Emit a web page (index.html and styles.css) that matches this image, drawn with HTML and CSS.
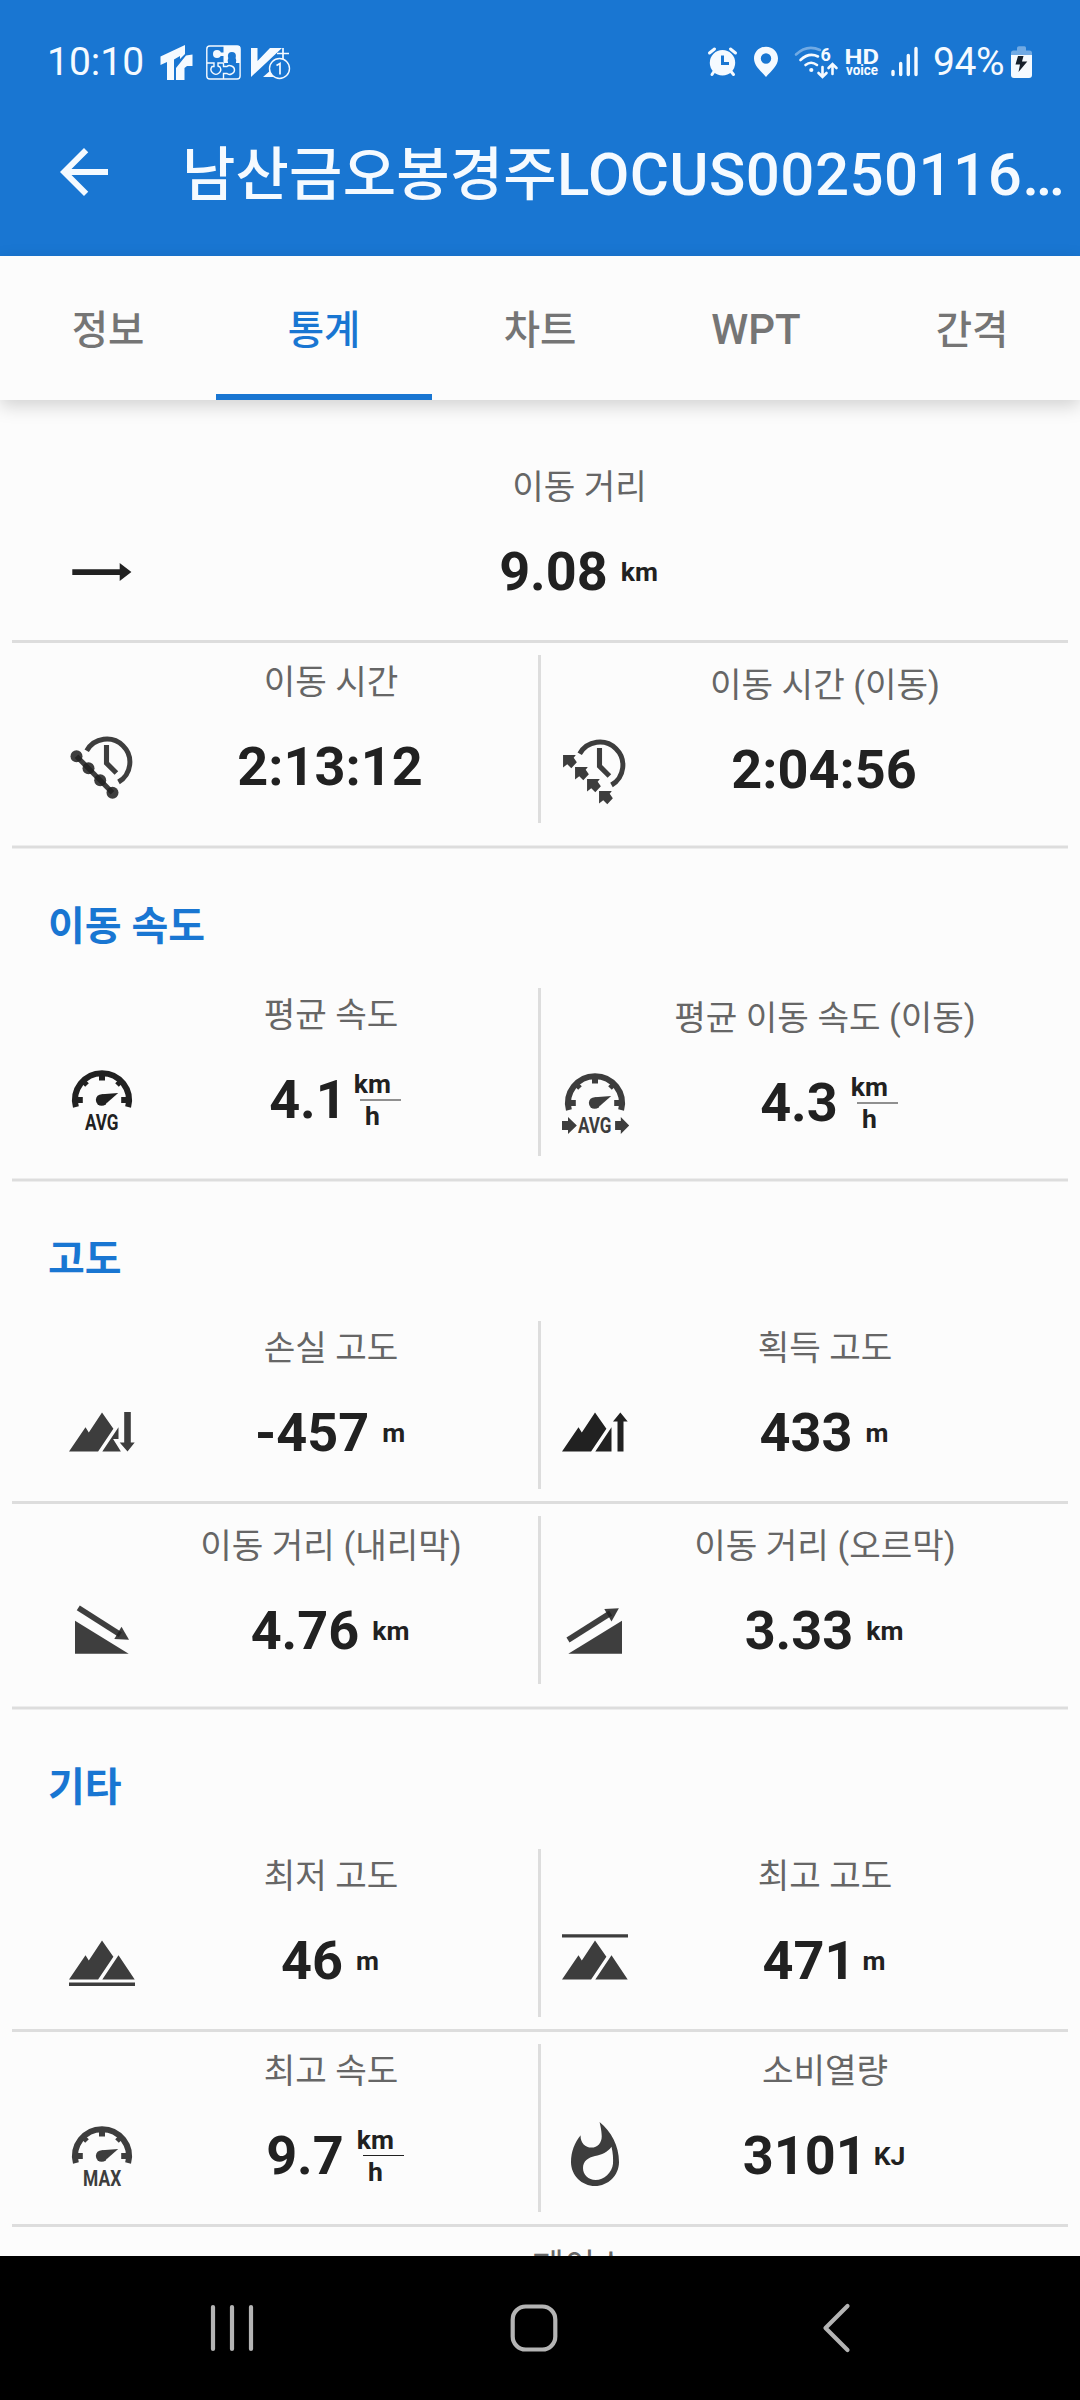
FILE: index.html
```html
<!DOCTYPE html>
<html lang="ko">
<head>
<meta charset="utf-8">
<title>통계</title>
<link rel="stylesheet" href="styles.css">
</head>
<body>
<svg class="defs" aria-hidden="true">
  <defs>
    <g id="gauge">
      <path d="M3.3 14.35A9 9 0 1 1 20.7 14.35" fill="none" stroke="currentColor" stroke-width="2"/>
      <path d="M3 12h2.6M21 12h-2.6M12 3v2.5" fill="none" stroke="currentColor" stroke-width="2"/>
      <path d="M5.9 5.9l1.1 1.1M18.100 5.9l-1.1 1.1" fill="none" stroke="currentColor" stroke-width="1.700"/>
      <path d="M11.900 10.100L17.400 9.700L13.600 13Z"/>
      <circle cx="11.900" cy="12" r="1.950"/>
    </g>
    <g id="clock">
      <path d="M6.900 6.550A7.7 7.7 0 1 1 17.500 17" fill="none" stroke="currentColor" stroke-width="1.650"/>
      <path d="M13.500 4.650V10.700L16.800 14" fill="none" stroke="currentColor" stroke-width="1.700"/>
    </g>
    <path id="peak" d="M1 18.200L6.500 10.100L7.600 11.800L12 5.200L15.800 10.600L10.700 18.200Z"/>
    <path id="hop" d="M1.350 7H5.600L4.900 7.900L5.950 9.400L4.100 11.400L2.750 10.100L1.350 11.200Z"/>
  </defs>
</svg>

<header class="appbar">
  <div class="status">
    <div class="status-side">
      <span class="time">10:10</span>
      <svg class="i-brand" viewBox="160 42 33 40"><path d="M160.500 56.500L185 45V54L180 59V56L174 59.500V80H167V62L160.500 65ZM176 80V68L186 55.500L192.500 54.500V66H187L184.500 68V80Z"/></svg>
      <svg class="i-puzzle" viewBox="205 42 37 40">
        <rect x="206.800" y="46" width="33.300" height="33" rx="3" fill="none" stroke="currentColor" stroke-width="1.400"/>
        <path d="M223.500 46H240V63H235.500C237 61 236.500 57 232 57S227 61 228.500 63H223.500Z"/>
        <circle cx="231.900" cy="56" r="4" class="cut"/><path d="M229 57h6l1 6h-8z" class="cut"/>
        <circle cx="217" cy="54" r="4"/><path d="M218 52.500h6v3.500h-6z"/>
        <path d="M207 63H214V66.500H212A4.800 4.800 0 1 0 220 67L218 66V63H223.500M223.500 63V66.500H227C229 64.500 234.500 66 234.500 70S229 75.500 227 73.500H223.500V79" fill="none" stroke="currentColor" stroke-width="1.400"/>
      </svg>
      <svg class="i-vplus" viewBox="250 42 42 40">
        <path d="M251 48H257.500V61L270 48H282L251 77ZM263 77L271 70L274 77Z"/>
        <path d="M283 48V59M277 53.500H289" stroke="currentColor" stroke-width="1.700"/>
        <circle cx="279.500" cy="68.500" r="10" class="ring"/>
        <path d="M276.500 65.500L280 63.500V74.500" fill="none" stroke="currentColor" stroke-width="1.700"/>
      </svg>
    </div>
    <div class="status-side">
      <svg class="i-alarm" viewBox="708 42 32 40">
        <circle cx="723.500" cy="62.800" r="12.700"/>
        <path d="M710.500 53L715.500 49M736.500 53L731.500 49M715 71.500L713 74.500M732 71.500L734.500 74.500" stroke="currentColor" stroke-width="3" stroke-linecap="round"/>
        <path d="M723.500 55.500V63.500H730" fill="none" class="cutline"/>
      </svg>
      <svg class="i-pin" viewBox="754 42 26 40"><path fill-rule="evenodd" d="M767 46.700C760 46.700 755 52 755 58.500C755 66 762 71 767 77C772 71 779 66 779 58.500C779 52 774 46.700 767 46.700ZM767 53.300A5.200 5.200 0 1 1 767 63.700A5.200 5.200 0 1 1 767 53.300Z"/></svg>
      <svg class="i-wifi" viewBox="794 42 46 40">
        <g fill="none" stroke="currentColor" stroke-linecap="round" stroke-width="2.600">
          <path d="M797 54.500Q808 44 821 50" opacity=".4"/>
          <path d="M801.500 60Q810 52 819 56.500M806.500 65Q812 60.500 818 65"/>
          <path d="M823.500 67V76.500M819.500 73L823.500 77L827.500 73M833.500 74V64.500M829.500 68L833.500 64L837.500 68"/>
        </g>
        <circle cx="812.300" cy="70" r="2.100"/>
        <text x="821.500" y="61" font-size="18" font-weight="700">6</text>
      </svg>
      <svg class="i-hd" viewBox="845 42 36 40">
        <text x="845.500" y="64" font-size="21" font-weight="700" textLength="34.500" lengthAdjust="spacingAndGlyphs">HD</text>
        <text x="847" y="75" font-size="14" font-weight="700" textLength="32" lengthAdjust="spacingAndGlyphs">voice</text>
      </svg>
      <svg class="i-signal" viewBox="891 42 30 40"><path d="M894 71.500V74.500M901.700 63.500V74.500M909.300 55.500V74.500M917 48.500V74.500" stroke="currentColor" stroke-width="3.400" stroke-linecap="round"/></svg>
      <span class="percent">94%</span>
      <svg class="i-battery" viewBox="1011 42 23 40">
        <path d="M1012 56V53Q1012 50.500 1014.500 50.500H1018V48Q1018 46.300 1020 46.300H1025.500Q1027 46.300 1027 48V50.500H1030.500Q1033 50.500 1033 53V56Z" opacity=".4"/>
        <path d="M1012 55H1033V75Q1033 78 1030 78H1015Q1012 78 1012 75Z"/>
        <path d="M1019 56H1024.500L1023 61.500H1028.300L1019.500 72L1021 64.500H1016.500Z" class="bolt"/>
      </svg>
    </div>
  </div>
  <div class="titlebar">
    <svg class="back" viewBox="0 0 24 24"><path d="M20 11H7.830l5.590-5.590L12 4l-8 8 8 8 1.410-1.410L7.830 13H20v-2z"/></svg>
    <h1><span class="hangul">남산금오봉경주</span>LOCUS00250116…</h1>
  </div>
</header>

<nav class="tabs">
  <a>정보</a><a class="active">통계</a><a>차트</a><a class="latin">WPT</a><a>간격</a>
</nav>

<main>
  <section>
    <div class="row">
      <div class="cell wide">
        <svg class="icon solid" viewBox="0 0 24 24"><path d="M2.100 11.050H17.900V9L21.800 12L17.900 15V13H2.100Z"/></svg>
        <div class="stat"><div class="label">이동 거리</div><div class="value"><b>9.08</b><span class="unit">km</span></div></div>
      </div>
    </div>
    <div class="row">
      <div class="cell">
        <svg class="icon layered" viewBox="0 0 24 24"><use href="#clock"/><path d="M3.500 8.400L15.500 20.600" stroke="currentColor" stroke-width="1.700"/><circle cx="3.500" cy="8.400" r="2"/><circle cx="7.500" cy="12.400" r="2"/><circle cx="11.400" cy="16.400" r="2"/><circle cx="15.500" cy="20.600" r="2"/></svg>
        <div class="stat"><div class="label">이동 시간</div><div class="value"><b>2:13:12</b></div></div>
      </div>
      <div class="cell low">
        <svg class="icon" viewBox="0 0 24 24"><use href="#clock"/><use href="#hop"/><use href="#hop" x="4" y="4"/><use href="#hop" x="8" y="8"/><use href="#hop" x="12" y="12"/></svg>
        <div class="stat"><div class="label">이동 시간 (이동)</div><div class="value"><b>2:04:56</b></div></div>
      </div>
    </div>
  </section>

  <section>
    <h2>이동 속도</h2>
    <div class="row">
      <div class="cell">
        <svg class="icon solid" viewBox="0 0 24 24"><use href="#gauge"/><text x="6.300" y="22" textLength="11.200" lengthAdjust="spacingAndGlyphs">AVG</text></svg>
        <div class="stat"><div class="label">평균 속도</div><div class="value kerned"><b>4.1</b><span class="unit ratio"><span>km</span><span>h</span></span></div></div>
      </div>
      <div class="cell low">
        <svg class="icon" viewBox="0 0 24 24"><use href="#gauge"/><text x="6.300" y="22" textLength="11.200" lengthAdjust="spacingAndGlyphs">AVG</text><path d="M1 18H3V16.700L5.950 19.500L3 22.300V21H1ZM18.700 18H20.600V16.700L23.400 19.500L20.600 22.300V21H18.700Z"/></svg>
        <div class="stat"><div class="label">평균 이동 속도 (이동)</div><div class="value"><b>4.3</b><span class="unit ratio"><span>km</span><span>h</span></span></div></div>
      </div>
    </div>
  </section>

  <section>
    <h2>고도</h2>
    <div class="row">
      <div class="cell">
        <svg class="icon" viewBox="0 0 24 24"><use href="#peak"/><path d="M17.500 10.100V14H15.700L18.300 18.200H12.100ZM19.400 5H21.600V15.200H22.900L20.500 18.200L17.900 15.200H19.400Z"/></svg>
        <div class="stat"><div class="label">손실 고도</div><div class="value"><b>-457</b><span class="unit">m</span></div></div>
      </div>
      <div class="cell">
        <svg class="icon solid" viewBox="0 0 24 24"><use href="#peak"/><path d="M17.500 10.100V18.200H12.100ZM19.500 18.200V8.200H18L20.450 5.200L22.900 8.200H21.500V18.200Z"/></svg>
        <div class="stat"><div class="label">획득 고도</div><div class="value"><b>433</b><span class="unit">m</span></div></div>
      </div>
    </div>
    <div class="row">
      <div class="cell low">
        <svg class="icon layered" viewBox="0 0 24 24"><path d="M3 8.550V19.550H20.900Z"/><path d="M4.100 4.300L18.100 13.200" stroke="currentColor" stroke-width="1.900"/><path d="M18.500 10.600L21 14.900L16.100 14.700Z"/></svg>
        <div class="stat"><div class="label">이동 거리 (내리막)</div><div class="value"><b>4.76</b><span class="unit">km</span></div></div>
      </div>
      <div class="cell low">
        <svg class="icon layered" viewBox="0 0 24 24"><path d="M21 8.550V19.550H3.100Z"/><path d="M3 15L17.200 6" stroke="currentColor" stroke-width="1.900"/><path d="M15.100 4.700L19.950 4.400L17.500 8.800Z"/></svg>
        <div class="stat"><div class="label">이동 거리 (오르막)</div><div class="value"><b>3.33</b><span class="unit">km</span></div></div>
      </div>
    </div>
  </section>

  <section>
    <h2>기타</h2>
    <div class="row">
      <div class="cell">
        <svg class="icon" viewBox="0 0 24 24"><use href="#peak"/><path d="M17.500 10.100L22.900 18.200H12.100ZM1 19.200H23V20.300H1Z"/></svg>
        <div class="stat"><div class="label">최저 고도</div><div class="value"><b>46</b><span class="unit">m</span></div></div>
      </div>
      <div class="cell">
        <svg class="icon" viewBox="0 0 24 24"><use href="#peak"/><path d="M17.500 10.100L22.900 18.200H12.100ZM1 3.050H23V4.150H1Z"/></svg>
        <div class="stat"><div class="label">최고 고도</div><div class="value kerned"><b>471</b><span class="unit">m</span></div></div>
      </div>
    </div>
    <div class="row">
      <div class="cell">
        <svg class="icon" viewBox="0 0 24 24"><use href="#gauge"/><text x="5.700" y="22" textLength="12.700" lengthAdjust="spacingAndGlyphs">MAX</text></svg>
        <div class="stat"><div class="label">최고 속도</div><div class="value"><b>9.7</b><span class="unit ratio thin"><span>km</span><span>h</span></span></div></div>
      </div>
      <div class="cell">
        <svg class="icon" viewBox="0 0 24 24"><path fill-rule="evenodd" d="M13.500.67s.74 2.650.74 4.800c0 2.060-1.350 3.730-3.410 3.730-2.070 0-3.630-1.670-3.630-3.730l.03-.36C5.210 7.510 4 10.620 4 14c0 4.420 3.580 8 8 8s8-3.580 8-8C20 8.610 17.410 3.800 13.500.67zM17.500 8.900C18 11 18.100 13 18 14.600C17.700 17.600 15 20 12.200 20C9.800 20 8 18.200 8 16C8 13.700 9.700 12.500 12 12C14.300 11.600 16.200 10.700 17.500 8.900Z"/></svg>
        <div class="stat"><div class="label">소비열량</div><div class="value kerned"><b>3101</b><span class="unit">KJ</span></div></div>
      </div>
    </div>
    <div class="row">
      <div class="cell wide">
        <span class="icon"></span>
        <div class="stat"><div class="label">페이스</div></div>
      </div>
    </div>
  </section>
</main>

<footer class="navbar">
  <svg viewBox="-32 -32 64 64"><path d="M-19 -21V21M0 -21V21M19 -21V21"/></svg>
  <svg viewBox="-32 -32 64 64"><rect x="-21.300" y="-21.500" width="42.600" height="43" rx="13"/></svg>
  <svg viewBox="-32 -32 64 64"><path d="M11.500 -22L-10.500 0L11.500 22"/></svg>
</footer>
</body>
</html>
```

FILE: styles.css
```css
* { box-sizing: border-box; }

body {
  margin: 0;
  width: 1080px;
  height: 2400px;
  overflow: hidden;
  display: flex;
  flex-direction: column;
  background: #fcfcfc;
  color: #212121;
  font-family: Roboto, "Noto Sans CJK KR", sans-serif;
}

svg { display: block; flex: none; fill: currentColor; }
.defs { position: absolute; width: 0; height: 0; }

/* App bar */
.appbar {
  flex: none;
  height: 256px;
  background: #1976d2;
  color: #f5faff;
}

.status {
  height: 88px;
  padding: 36px 47px 0 47px;
  display: flex;
  justify-content: space-between;
  align-items: center;
}

.status-side { display: flex; align-items: center; }
.status-side svg { height: 40px; overflow: visible; }
.time { width: 113px; font-size: 39px; line-height: 42px; }
.percent { width: 77px; padding-left: 13px; font-size: 39px; line-height: 42px; letter-spacing: -.4px; white-space: nowrap; }
.i-brand { width: 33px; }
.i-puzzle { width: 37px; margin-left: 12px; }
.i-vplus { width: 42px; margin-left: 8px; }
.i-alarm { width: 32px; }
.i-pin { width: 26px; margin-left: 14px; }
.i-wifi { width: 46px; margin-left: 14px; }
.i-hd { width: 36px; margin-left: 5px; }
.i-signal { width: 30px; margin-left: 10px; }
.i-battery { width: 23px; margin-left: 13px; }
.cut { fill: #1976d2; }
.cutline { stroke: #1976d2; stroke-width: 3; }
.ring { fill: #1976d2; stroke: currentColor; stroke-width: 1.400; }
.bolt { fill: #16202c; }

.titlebar {
  height: 168px;
  padding: 6px 0 0 48px;
  display: flex;
  align-items: center;
  gap: 62px;
}

.back { width: 72px; height: 72px; margin-top: -6px; }

h1 {
  margin: 0;
  font-size: 60px;
  font-weight: 500;
  line-height: 80px;
  letter-spacing: .45px;
  white-space: nowrap;
}

.hangul { font-size: 58px; letter-spacing: .2px; }

/* Tabs */
.tabs {
  flex: none;
  height: 144px;
  display: grid;
  grid-template-columns: repeat(5, 1fr);
  background: #fcfcfc;
  box-shadow: 0 6px 17px rgba(0, 0, 0, .17);
}

.tabs a {
  display: flex;
  align-items: center;
  justify-content: center;
  padding-top: 11px;
  border-bottom: 6px solid transparent;
  font-size: 39.500px;
  font-weight: 500;
  line-height: 60px;
  color: #757575;
}

.tabs .latin { padding-top: 9px; font-size: 42px; }
.tabs .active { color: #1976d2; border-bottom-color: #1976d2; }

/* Statistics */
main {
  flex: 1;
  min-height: 0;
  overflow: hidden;
  padding: 48px 12px 0;
  margin-top: 24px;
}

main section:first-child { margin-top: -24px; }

h2 {
  margin: 0;
  height: 127px;
  padding: 48px 0 0 36px;
  font-size: 40px;
  font-weight: 700;
  line-height: 60px;
  color: #1976d2;
}

.row {
  display: flex;
  padding: 12px 0;
  border-bottom: 3px solid #dddddd;
}

.row:last-child {
  padding-bottom: 22px;
  border-bottom: 0;
}

/* The section rule is softened at both edges */
section {
  padding-bottom: 4px;
  background: linear-gradient(#ededed 0 1px, #dddddd 1px 3px, #ededed 3px 4px) bottom / 100% 4px no-repeat;
}

.cell {
  width: 526px;
  height: 168px;
  padding: 0 18px 0 54px;
  display: flex;
}

.cell + .cell {
  width: 530px;
  padding: 0 53px 0 18px;
  border-left: 3px solid #dddddd;
}

.cell.wide { width: 1056px; padding-right: 51px; }
.low > * { position: relative; top: 3px; }

.icon {
  flex: none;
  width: 72px;
  height: 72px;
  margin-top: 76px;
  color: #3d3d3d;
  overflow: visible;
}

.icon.solid { color: #212121; }
.icon.layered { color: rgba(33, 33, 33, .87); }
.icon text { font-size: 7.050px; font-weight: 700; }

.stat { flex: 1; padding-left: 4px; text-align: center; }

.label {
  height: 54px;
  margin-bottom: 18px;
  font-size: 34.300px;
  line-height: 55px;
  color: #666666;
  white-space: nowrap;
}

.value {
  height: 80px;
  padding-right: 2px;
  display: flex;
  align-items: center;
  justify-content: center;
  gap: 13px;
}

.value b { font-size: 54px; line-height: 80px; }
.kerned { gap: 7px; }
.unit { font-size: 26.500px; font-weight: 700; line-height: 32px; }

.ratio {
  position: relative;
  display: flex;
  flex-direction: column;
  align-items: center;
}

.ratio::after {
  content: "";
  position: absolute;
  left: 6px;
  top: 31px;
  width: 41px;
  height: 2px;
  background: #909090;
}

.ratio.thin::after { height: 1px; background: #212121; }

/* System navigation */
.navbar {
  flex: none;
  height: 144px;
  padding-left: 200px;
  display: flex;
  align-items: center;
  gap: 238px;
  background: #000000;
  color: #b4b4b4;
}

.navbar svg {
  width: 64px;
  height: 64px;
  fill: none;
  stroke: currentColor;
  stroke-width: 4.200;
  stroke-linecap: round;
  stroke-linejoin: round;
}
```
